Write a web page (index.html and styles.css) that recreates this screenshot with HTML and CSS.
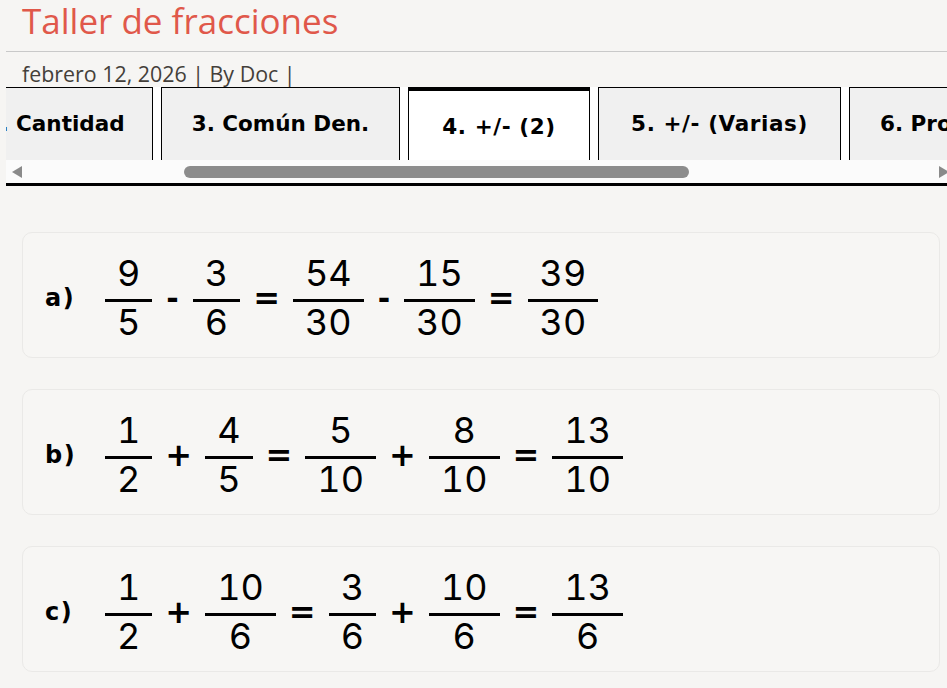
FILE: index.html
```html
<!DOCTYPE html>
<html lang="es">
<head>
<meta charset="utf-8">
<title>Taller de fracciones</title>
<link rel="stylesheet" href="styles.css">
</head>
<body>
<div class="page">
  <header class="post-head">
    <h1 class="title">Taller de fracciones</h1>
  </header>
  <div class="meta">febrero 12, 2026 | By Doc |</div>

  <div class="tabs">
    <div class="tab-viewport">
      <div class="tab-strip">
        <div class="tab tab-cantidad">2. Cantidad</div>
        <div class="tab tab-comun">3. Común Den.</div>
        <div class="tab tab-dos active">4. +/- (2)</div>
        <div class="tab tab-varias">5. +/- (Varias)</div>
        <div class="tab">6. Problemas</div>
      </div>
    </div>
    <div class="hscroll">
      <span class="arrow arrow-left"></span>
      <div class="track"><div class="thumb"></div></div>
      <span class="arrow arrow-right"></span>
    </div>
  </div>

  <div class="exercises">
    <div class="card">
      <span class="label">a)</span>
      <span class="frac"><span class="num">9</span><span class="den">5</span></span>
      <span class="op minus">-</span>
      <span class="frac"><span class="num">3</span><span class="den">6</span></span>
      <span class="op">=</span>
      <span class="frac"><span class="num">54</span><span class="den">30</span></span>
      <span class="op minus">-</span>
      <span class="frac"><span class="num">15</span><span class="den">30</span></span>
      <span class="op">=</span>
      <span class="frac"><span class="num">39</span><span class="den">30</span></span>
    </div>
    <div class="card">
      <span class="label">b)</span>
      <span class="frac"><span class="num">1</span><span class="den">2</span></span>
      <span class="op">+</span>
      <span class="frac"><span class="num">4</span><span class="den">5</span></span>
      <span class="op">=</span>
      <span class="frac"><span class="num">5</span><span class="den">10</span></span>
      <span class="op">+</span>
      <span class="frac"><span class="num">8</span><span class="den">10</span></span>
      <span class="op">=</span>
      <span class="frac"><span class="num">13</span><span class="den">10</span></span>
    </div>
    <div class="card">
      <span class="label">c)</span>
      <span class="frac"><span class="num">1</span><span class="den">2</span></span>
      <span class="op">+</span>
      <span class="frac"><span class="num">10</span><span class="den">6</span></span>
      <span class="op">=</span>
      <span class="frac"><span class="num">3</span><span class="den">6</span></span>
      <span class="op">+</span>
      <span class="frac"><span class="num">10</span><span class="den">6</span></span>
      <span class="op">=</span>
      <span class="frac"><span class="num">13</span><span class="den">6</span></span>
    </div>
  </div>
</div>
</body>
</html>
```

FILE: styles.css
```css
html, body {
  margin: 0;
  padding: 0;
  overflow: hidden;
  background: #f6f5f3;
}

.page {
  width: 950px;
  margin-left: 6px;
  font-family: "Open Sans", "DejaVu Sans", sans-serif;
  color: #444;
}

.post-head {
  box-sizing: border-box;
  height: 52px;
  border-bottom: 1px solid #c9c9c9;
}

.title {
  margin: 0;
  padding-left: 16px;
  font-family: "Open Sans", sans-serif;
  font-weight: 400;
  font-size: 35px;
  line-height: 41px;
  color: #e0584a;
}

.meta {
  box-sizing: border-box;
  height: 35px;
  padding: 8px 0 0 16px;
  font-size: 21.4px;
  line-height: 27px;
  color: #443f3a;
}

.tabs {
  border-bottom: 3px solid #000;
  background: #ffffff;
}

.tab-viewport {
  overflow: hidden;
  height: 73px;
  background: #ffffff;
}

.tab-strip {
  display: flex;
  gap: 8px;
  margin-left: -49px;
}

.tab {
  flex: none;
  box-sizing: border-box;
  height: 74px;
  padding: 24px 30px 0;
  border: 1px solid #000;
  background: #f0f0f0;
  font-family: "DejaVu Sans", sans-serif;
  font-weight: 700;
  font-size: 21.5px;
  line-height: 24px;
  color: #000;
  text-align: center;
  white-space: nowrap;
}

.tab-cantidad { width: 196px; padding-left: 0; padding-right: 0; }
.tab-comun { width: 239px; padding-left: 0; padding-right: 0; }
.tab-dos { width: 182px; padding-left: 0; padding-right: 0; }
.tab-varias { width: 243px; padding-left: 0; padding-right: 0; }

.tab.active {
  background: #ffffff;
  border-top: 4px solid #000;
  letter-spacing: 0.6px;
}

.tab-varias {
  letter-spacing: 0.6px;
}

.hscroll {
  display: flex;
  align-items: center;
  height: 23px;
  background: #fbfbfb;
}

.arrow {
  flex: none;
  width: 0;
  height: 0;
  border-top: 6px solid transparent;
  border-bottom: 6px solid transparent;
}

.arrow-left {
  margin-left: 6px;
  border-right: 10px solid #8a8a8a;
}

.arrow-right {
  margin-right: 7px;
  border-left: 10px solid #8a8a8a;
}

.track {
  flex: 1;
  height: 12px;
}

.thumb {
  margin-left: 162px;
  width: 505px;
  height: 12px;
  border-radius: 6px;
  background: #8c8c8c;
}

.exercises {
  display: flex;
  flex-direction: column;
  gap: 31px;
  padding: 46px 16px 0;
}

.card {
  box-sizing: border-box;
  height: 126px;
  display: flex;
  align-items: center;
  padding-left: 22px;
  border: 1px solid #eae9e7;
  border-radius: 10px;
  background: #f7f6f4;
  color: #000;
}

.label {
  font-family: "DejaVu Sans", sans-serif;
  font-weight: 700;
  font-size: 24px;
  letter-spacing: 1.5px;
  width: 31px;
  margin-right: 29px;
  margin-top: 6px;
}

.frac {
  display: inline-flex;
  flex-direction: column;
  align-items: stretch;
  text-align: center;
  font-family: "Inter", "Open Sans", sans-serif;
  font-size: 36px;
  font-variant-numeric: tabular-nums;
  line-height: 40px;
  margin-top: 4px;
}

.num {
  padding: 0 12px 6px;
  border-bottom: 3px solid #000;
}

.den {
  padding: 0 12px;
}

.op {
  font-family: "DejaVu Sans", sans-serif;
  font-weight: 700;
  font-size: 32px;
  margin: 6px 13px 0;
}

.op.minus {
  font-size: 30px;
  margin: 6px 14px 0;
}
```
